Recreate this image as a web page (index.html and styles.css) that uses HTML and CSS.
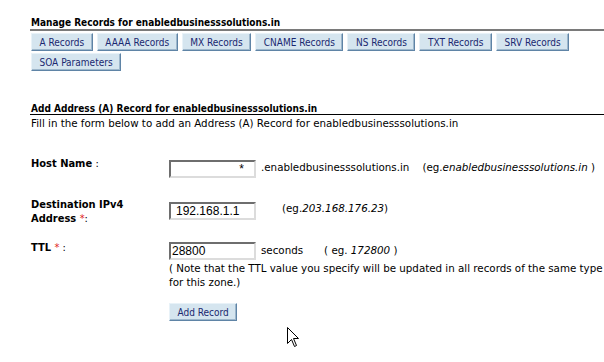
FILE: index.html
```html
<!DOCTYPE html>
<html lang="en">
<head>
  <meta charset="UTF-8" />
  <title>Manage Records</title>
  <link rel="stylesheet" href="styles.css">
</head>
<body>

<div class="page">
  <div class="section-title manage">Manage Records for enabledbusinesssolutions.in</div>
  <div class="tabs">
    <button class="btn">A Records</button>
    <button class="btn">AAAA Records</button>
    <button class="btn">MX Records</button>
    <button class="btn">CNAME Records</button>
    <button class="btn">NS Records</button>
    <button class="btn">TXT Records</button>
    <button class="btn">SRV Records</button>
    <button class="btn">SOA Parameters</button>
  </div>

  <div class="section-title add">Add Address (A) Record for enabledbusinesssolutions.in</div>
  <div class="intro">Fill in the form below to add an Address (A) Record for enabledbusinesssolutions.in</div>

  <div class="form">
    <div class="row host">
      <div class="label">Host Name <span class="colon">:</span></div>
      <div class="field">
        <input class="txt star" type="text" value="*"><span class="suffix">.enabledbusinesssolutions.in</span><span class="eg host-eg">(eg.<i>enabledbusinesssolutions.in</i> )</span>
      </div>
    </div>

    <div class="row ip">
      <div class="label">Destination IPv4<br>Address <span class="req">*</span><span class="colon">:</span></div>
      <div class="field">
        <input class="txt pad" type="text" value="192.168.1.1"><span class="eg ip-eg">(eg.<i>203.168.176.23</i>)</span>
      </div>
    </div>

    <div class="row ttl">
      <div class="label">TTL <span class="req">*</span><span class="colon"> :</span></div>
      <div class="field">
        <input class="txt" type="text" value="28800"><span class="suffix">seconds</span><span class="eg ttl-eg">( eg. <i>172800</i> )</span>
        <div class="note">( Note that the TTL value you specify will be updated in all records of the same type<br>for this zone.)</div>
      </div>
    </div>

    <div class="row submit">
      <div class="label"></div>
      <div class="field"><button class="btn">Add Record</button></div>
    </div>
  </div>
</div>

<svg class="cursor" width="13" height="21" viewBox="0 0 13 21">
  <path d="M0.5 0.5 L0.5 16.5 L4.5 12.5 L7.5 19.5 L9.5 18.5 L6.5 11.5 L11.5 11.5 Z" fill="#fff" stroke="#000" stroke-width="1"/>
</svg>

</body>
</html>
```

FILE: styles.css
```css
body {
  margin: 0;
  background: #fff;
  font-family: "DejaVu Sans", Verdana, sans-serif;
  font-size: 10.3px;
  color: #000;
}
.page {
  padding: 17px 0 0 30px;
}
.section-title {
  font-family: "DejaVu Sans Condensed", "DejaVu Sans", sans-serif;
  font-weight: bold;
  font-size: 10px;
  padding-left: 1px;
}
.manage {
  border-bottom: 2px solid #7a7a7a;
  padding-bottom: 1px;
}
.add {
  margin-top: 32px;
  border-bottom: 1px solid #000;
}
.tabs {
  display: flex;
  flex-wrap: wrap;
  gap: 2px 4px;
  padding: 2px 0 0 1px;
}
.btn {
  font-family: "DejaVu Sans Condensed", Tahoma, sans-serif;
  font-size: 10px;
  color: #1a2870;
  background: #d5e5ef;
  border: 1px solid;
  border-color: #e8f2f8 #5f84a6 #5f84a6 #e8f2f8;
  box-shadow: inset -1px -1px 0 #9db7cc;
  padding: 2px 7.5px;
  height: 18px;
  margin: 0;
}
.intro {
  padding-left: 1px;
  margin-top: 2px;
}
.form {
  margin-top: 28px;
}
.row {
  display: grid;
  grid-template-columns: 139px 1fr;
  align-items: start;
}
.label {
  font-family: "DejaVu Sans Condensed", "DejaVu Sans", sans-serif;
  font-weight: bold;
  font-size: 11px;
  padding-left: 1px;
  line-height: 14px;
}
.colon {
  font-weight: normal;
}
.req {
  color: #e02020;
  font-weight: normal;
}
.field {
  white-space: nowrap;
}
.txt {
  width: 87px;
  height: 18px;
  box-sizing: border-box;
  border: 2px solid;
  border-color: #6e6e6e #dcdcdc #dcdcdc #6e6e6e;
  font-family: "Liberation Sans", Arial, sans-serif;
  font-size: 12px;
  padding: 0 1px;
  margin: 0;
  vertical-align: middle;
}
.star {
  text-align: right;
  padding-right: 10px;
}
.pad {
  padding-left: 5px;
}
.suffix {
  margin-left: 5px;
}
.host-eg {
  margin-left: 13px;
}
.ip-eg {
  margin-left: 26px;
}
.ttl-eg {
  margin-left: 21px;
}
.host .txt {
  margin-top: 3px;
}
.ip {
  margin-top: 20px;
}
.ip .txt {
  margin-top: 4px;
}
.ttl {
  margin-top: 15px;
}
.ttl .txt {
  margin-top: 1px;
}
.note {
  line-height: 14px;
  margin-top: 1px;
}
.submit {
  margin-top: 14px;
}
.cursor {
  position: absolute;
  left: 287px;
  top: 327px;
}
```
